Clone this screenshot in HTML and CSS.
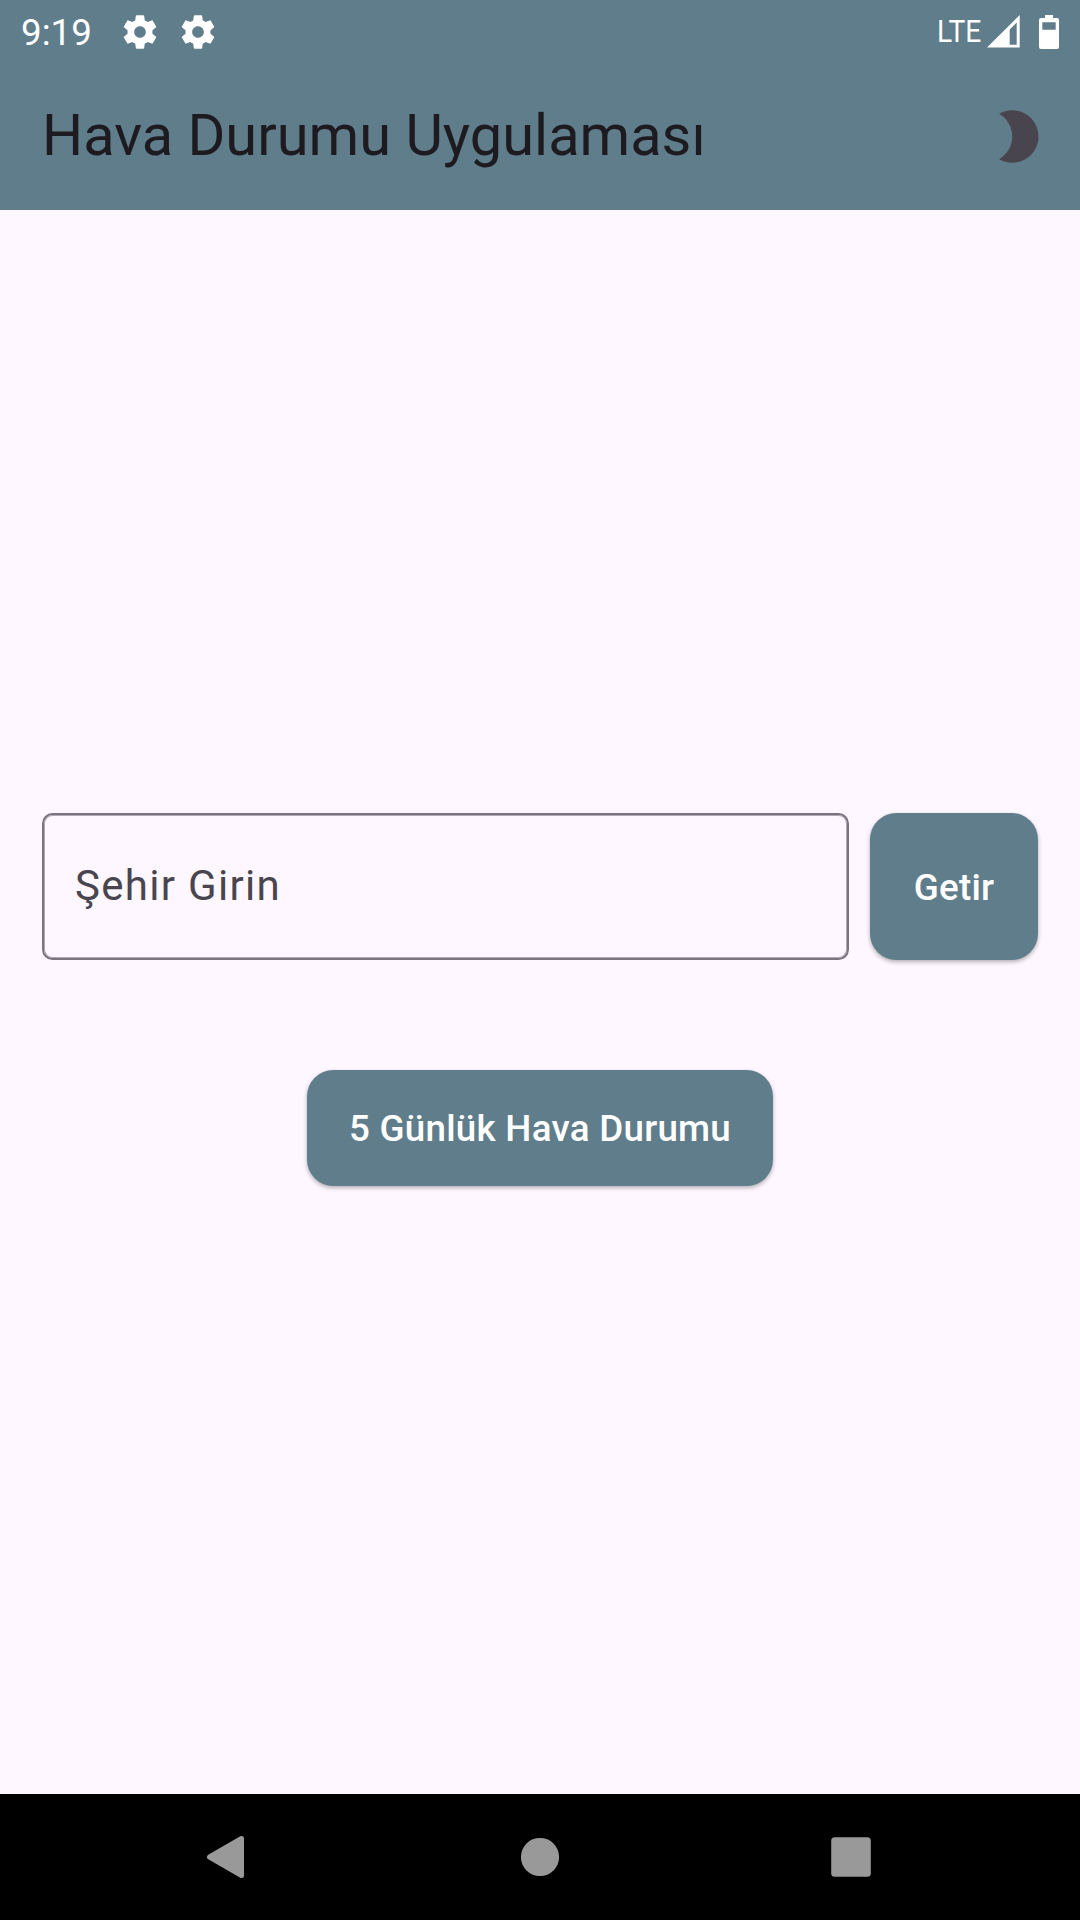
FILE: index.html
```html
<!DOCTYPE html>
<html lang="tr">
<head>
<meta charset="utf-8">
<title>Hava Durumu Uygulaması</title>
<link rel="stylesheet" href="styles.css">
</head>
<body>
<div class="screen">
  <header class="top">
    <div class="status-bar">
      <span class="clock">9:19</span>
      <svg class="gear" viewBox="0 0 24 24"><path id="gear" d="M19.43 12.98c.04-.32.07-.64.07-.98s-.03-.66-.07-.98l2.11-1.65c.19-.15.24-.42.12-.64l-2-3.46c-.12-.22-.39-.3-.61-.22l-2.49 1c-.52-.4-1.08-.73-1.69-.98l-.38-2.65C14.46 2.18 14.25 2 14 2h-4c-.25 0-.46.18-.49.42l-.38 2.65c-.61.25-1.17.59-1.69.98l-2.49-1c-.23-.09-.49 0-.61.22l-2 3.46c-.13.22-.07.49.12.64l2.11 1.65c-.04.32-.07.65-.07.98s.03.66.07.98l-2.11 1.65c-.19.15-.24.42-.12.64l2 3.46c.12.22.39.3.61.22l2.49-1c.52.4 1.08.73 1.69.98l.38 2.65c.03.24.24.42.49.42h4c.25 0 .46-.18.49-.42l.38-2.65c.61-.25 1.17-.59 1.69-.98l2.49 1c.23.09.49 0 .61-.22l2-3.46c.12-.22.07-.49-.12-.64l-2.11-1.65zM12 15.5c-1.93 0-3.5-1.57-3.5-3.5s1.57-3.5 3.5-3.5 3.5 1.57 3.5 3.5-1.57 3.5-3.5 3.5z"/></svg>
      <svg class="gear" viewBox="0 0 24 24"><use href="#gear"/></svg>
      <span class="network">LTE</span>
      <svg class="signal" viewBox="0 0 33 33"><path fill-rule="evenodd" d="M0 32.5 32.7 0v32.5zM22.7 14.5v15.2h7V7.5z"/></svg>
      <svg class="battery" viewBox="0 0 20 34"><path fill-rule="evenodd" d="M6 0h8v3h4a2 2 0 0 1 2 2v27a2 2 0 0 1-2 2H2a2 2 0 0 1-2-2V5a2 2 0 0 1 2-2h4zM3.3 7.3v7.4h13.4V7.3z"/></svg>
    </div>
    <div class="app-bar">
      <h1 class="title">Hava Durumu Uygulaması</h1>
      <svg class="moon" viewBox="0 0 24 24"><path d="M10 2c-1.82 0-3.53.5-5 1.35C7.99 5.08 10 8.3 10 12s-2.01 6.92-5 8.65C6.47 21.5 8.18 22 10 22c5.52 0 10-4.48 10-10S15.52 2 10 2z"/></svg>
    </div>
  </header>
  <main class="content">
    <div class="search">
      <div class="field">Şehir Girin</div>
      <button class="button fetch">Getir</button>
    </div>
    <button class="button forecast">5 Günlük Hava Durumu</button>
  </main>
  <nav class="nav-bar">
    <svg class="nav-icon" viewBox="0 0 48 48"><path stroke-width="5" stroke-linejoin="round" stroke="#999" d="M4.5 24 36.5 5.5v37z"/></svg>
    <svg class="nav-icon" viewBox="0 0 48 48"><circle cx="24" cy="24" r="19.1"/></svg>
    <svg class="nav-icon" viewBox="0 0 48 48"><rect x="4.2" y="4.2" width="39.6" height="39.6" rx="3.5"/></svg>
  </nav>
</div>
</body>
</html>
```
FILE: styles.css
```css
* {
  box-sizing: border-box;
}

body {
  margin: 0;
  font-family: Roboto, "Noto Sans", sans-serif;
  background: #fef7ff;
}

svg {
  display: block;
  flex: none;
}

.screen {
  display: flex;
  flex-direction: column;
  width: 1080px;
  height: 1920px;
}

.top {
  background: #607d8b;
}

.status-bar {
  display: flex;
  align-items: center;
  height: 63px;
  padding: 0 21px;
  color: #fff;
  fill: #fff;
}

.clock {
  width: 99px;
  padding-top: 2px;
  font-size: 36.75px;
  line-height: 43px;
}

.gear {
  width: 40px;
  height: 40px;
  margin-right: 18px;
}

.network {
  margin-left: auto;
  margin-right: 6px;
  padding-bottom: 2px;
  font-size: 32px;
  line-height: 38px;
  transform: scaleX(0.88);
  transform-origin: right;
}

.signal {
  width: 33px;
  height: 33px;
  margin-right: 19px;
}

.battery {
  width: 20px;
  height: 34px;
}

.app-bar {
  display: flex;
  align-items: center;
  justify-content: space-between;
  height: 147px;
  padding: 0 31.5px 0 42px;
}

.title {
  margin: 0;
  padding-bottom: 4px;
  font-size: 57.75px;
  font-weight: 400;
  line-height: 74px;
  color: #1d1b20;
}

.moon {
  width: 63px;
  height: 63px;
  fill: #49454f;
}

.content {
  flex: 1;
  display: flex;
  flex-direction: column;
  align-items: center;
  justify-content: center;
  gap: 110px;
  padding: 0 42px 5px;
}

.search {
  display: flex;
  gap: 21px;
  width: 100%;
  height: 147px;
}

.field {
  flex: 1;
  padding: 0 31px;
  border: 2px solid #79747e;
  border-radius: 10.5px;
  box-shadow: inset 0 0 0 1px rgba(121, 116, 126, 0.6);
  font-size: 42px;
  line-height: 141px;
  letter-spacing: 1.3125px;
  color: #49454f;
}

.button {
  padding: 2px 0 0;
  border: 0;
  border-radius: 26.25px;
  background: #607d8b;
  box-shadow: 0 2px 4px rgba(0, 0, 0, 0.3);
  font: 500 36.75px/52px Roboto, "Noto Sans", sans-serif;
  letter-spacing: 0.2625px;
  color: #fff;
}

.fetch {
  width: 168px;
}

.forecast {
  width: 466px;
  height: 116px;
}

.nav-bar {
  display: flex;
  align-items: center;
  justify-content: center;
  gap: 263px;
  height: 126px;
  background: #000;
  fill: #999;
}

.nav-icon {
  width: 48px;
  height: 48px;
}
```
